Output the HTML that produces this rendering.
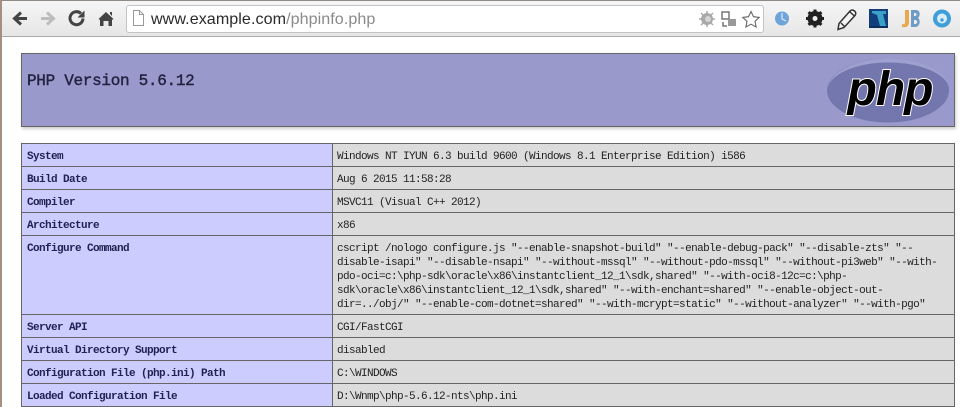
<!DOCTYPE html>
<html><head><meta charset="utf-8"><style>
html,body{margin:0;padding:0;background:#fff}
body{width:960px;height:407px;overflow:hidden;position:relative;font-family:"Liberation Mono",monospace;color:#222}
.a{position:absolute}
#bar{left:0;top:0;width:960px;height:36px;background:linear-gradient(#f6f6f6,#e6e6e6);border-bottom:1px solid #a9a9a9}
#top{left:0;top:0;width:960px;height:1px;background:#8f8a86}
#edge{left:0;top:0;width:2px;height:407px;background:#a58f80}
#url{left:126px;top:5px;width:636px;height:26px;background:#fff;border:1px solid #c4c4c4;border-radius:3px}
#txt{left:151px;top:10px;font:16.1px/18px "Liberation Sans",sans-serif;letter-spacing:.06px;color:#2a2a2a;white-space:nowrap}
#txt span{color:#8a8a8a}
#hd{left:21px;top:53px;width:932px;height:72px;background:#9999cc;border:1px solid #666;box-shadow:1px 2px 3px #ccc}
#hd b{position:absolute;left:5px;top:17px;font:normal 16px/20px "Liberation Mono",monospace;letter-spacing:-.3px;color:#222240;-webkit-text-stroke:.4px #222240;white-space:pre}
.r{position:absolute;left:21px;width:932px;border:1px solid #666;box-sizing:content-box;font-size:10px}
.e,.v{position:absolute;top:0;bottom:0;box-sizing:border-box;padding:6px 0 0 5px;white-space:pre;line-height:14px;font-size:11px;letter-spacing:-.6px}
.e{left:0;width:311px;background:#ccccff;border-right:1px solid #666;font-weight:bold;color:#222250}
.v{left:311px;right:0;padding-left:4px;background:#dcdcdc;color:#222}
</style></head><body>
<div class="a" id="bar"></div><div class="a" id="top"></div>
<svg class="a" style="left:0;top:0" width="125" height="36" viewBox="0 0 125 36">
<path d="M27 18.5H16M21 12.5l-6.500 6 6.500 6" fill="none" stroke="#444" stroke-width="3"/>
<path d="M41 18.500h11M47 12.500l6.500 6-6.500 6" fill="none" stroke="#bdbdbd" stroke-width="3"/>
<path d="M83 18.500a6.500 6.500 0 1 1-2-5" fill="none" stroke="#444" stroke-width="3"/><path d="M84.500 10.500v7h-7z" fill="#444"/>
<path d="M98.500 19L106 12l7.500 7-1.500 1v6h-3.500v-5h-5v5H100v-6z" fill="#444"/><path d="M110 12h2v4l-2-2z" fill="#444"/>
</svg>
<div class="a" id="url"></div>
<svg class="a" style="left:131px;top:9px" width="14" height="18"><path d="M2.500 1.500h6l4 4v11h-10z M8.500 1.500v4h4" fill="#fff" stroke="#9a9a9a"/></svg>
<div class="a" id="txt">www.example.com<span>/phpinfo.php</span></div>
<svg class="a" style="left:695px;top:5px" width="265" height="30" viewBox="695 5 265 30">
<circle cx="707" cy="19" r="6" fill="#a9a9a9"/><path d="M699 19h16M707 11v16M701 13l12 12M713 13l-12 12" stroke="#a9a9a9" stroke-width="1.500"/><circle cx="708" cy="19" r="3" fill="#d5d5d5"/>
<rect x="722" y="12" width="7" height="7" fill="none" stroke="#777" stroke-width="1.500"/><rect x="728" y="19" width="8" height="7" fill="#999"/><path d="M723 22v4h4" fill="none" stroke="#777" stroke-width="1.500"/>
<path d="M751 11.500l2.500 5.200 5.700.7-4.200 3.900 1.100 5.700-5.100-2.800-5.100 2.800 1.100-5.700-4.200-3.900 5.700-.7z" fill="#fff" stroke="#666" stroke-width="1.100"/>
<circle cx="782" cy="18.500" r="7" fill="#6fa4d8"/><path d="M782 13v6l4 2" fill="none" stroke="#dcebf7" stroke-width="1.200"/>
<circle cx="815" cy="18.500" r="5.500" fill="none" stroke="#222" stroke-width="4"/><path d="M815 9.500v18M806 18.500h18M808.600 12.100l12.800 12.800M821.400 12.100l-12.800 12.800" stroke="#222" stroke-width="3"/><circle cx="815" cy="18.500" r="2.500" fill="#f0f0f0"/>
<path d="M839 23.500l11-12.500c1.500-1.500 3-1.200 4.500 0s1.700 3 .5 4.500l-11 12-6 2z M850 12l5 4.500M841 23l4 4" fill="#f4f4f4" stroke="#333" stroke-width="1.500"/>
<rect x="869" y="9" width="19" height="19" fill="#123f7c"/><path d="M872 11h14v3l-3 0 3 12h-6l-3-11-5-2z" fill="#3aa0c8"/><rect x="869" y="26" width="19" height="2" fill="#0c2f60"/>
<path d="M905 10h4v13c0 3-3 5-7 4v-3c2 .5 3 0 3-2z" fill="#e8a94e"/>
<path d="M911 10h5c4 0 5 5 2 8 3 2 2 9-3 9h-4zM914 13v3h1c2 0 2-3 0-3zM914 20v4h1c3 0 3-4 0-4z" fill="#6f9cc4"/>
<circle cx="942" cy="18.500" r="9" fill="#3f9fd8"/><circle cx="942" cy="18.500" r="5" fill="#dcecf5"/><circle cx="942" cy="20" r="1.700" fill="#3f9fd8"/>
</svg>
<div class="a" id="hd"><b>PHP Version 5.6.12</b></div>
<svg class="a" style="left:826px;top:56px" width="126" height="68" viewBox="826 56 126 68">
<ellipse cx="888" cy="90.500" rx="61" ry="32" fill="#7377ad"/>
<path d="M827.500 90.500a61 32 0 0 1 122 0a61 28 0 0 0-122 0" fill="#9ea1cf"/>
<text x="890" y="105" text-anchor="middle" font-family="Liberation Sans,sans-serif" font-weight="bold" font-style="italic" font-size="48" letter-spacing="-1" fill="#000" stroke="#fff" stroke-width="2" paint-order="stroke">php</text>
</svg>
<div class="r" style="top:143px;height:22px"><div class="e">System</div><div class="v">Windows NT IYUN 6.3 build 9600 (Windows 8.1 Enterprise Edition) i586</div></div>
<div class="r" style="top:166px;height:22px"><div class="e">Build Date</div><div class="v">Aug 6 2015 11:58:28</div></div>
<div class="r" style="top:189px;height:22px"><div class="e">Compiler</div><div class="v">MSVC11 (Visual C++ 2012)</div></div>
<div class="r" style="top:212px;height:22px"><div class="e">Architecture</div><div class="v">x86</div></div>
<div class="r" style="top:235px;height:78px"><div class="e">Configure Command</div><div class="v">cscript /nologo configure.js "--enable-snapshot-build" "--enable-debug-pack" "--disable-zts" "--
disable-isapi" "--disable-nsapi" "--without-mssql" "--without-pdo-mssql" "--without-pi3web" "--with-
pdo-oci=c:\php-sdk\oracle\x86\instantclient_12_1\sdk,shared" "--with-oci8-12c=c:\php-
sdk\oracle\x86\instantclient_12_1\sdk,shared" "--with-enchant=shared" "--enable-object-out-
dir=../obj/" "--enable-com-dotnet=shared" "--with-mcrypt=static" "--without-analyzer" "--with-pgo"</div></div>
<div class="r" style="top:314px;height:22px"><div class="e">Server API</div><div class="v">CGI/FastCGI</div></div>
<div class="r" style="top:337px;height:22px"><div class="e">Virtual Directory Support</div><div class="v">disabled</div></div>
<div class="r" style="top:360px;height:22px"><div class="e">Configuration File (php.ini) Path</div><div class="v">C:\WINDOWS</div></div>
<div class="r" style="top:383px;height:22px"><div class="e">Loaded Configuration File</div><div class="v">D:\Wnmp\php-5.6.12-nts\php.ini</div></div>
<div class="a" id="edge"></div>
</body></html>
